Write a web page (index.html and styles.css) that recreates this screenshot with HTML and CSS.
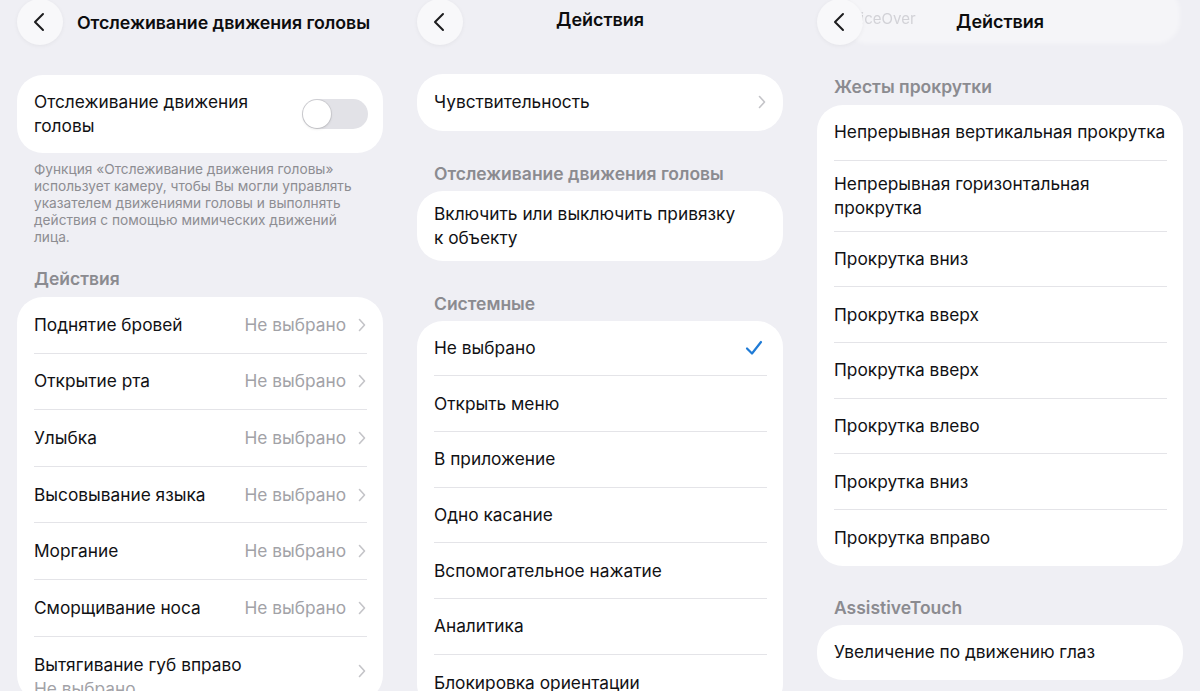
FILE: index.html
```html
<!DOCTYPE html>
<html lang="ru">
<head>
<meta charset="utf-8">
<title>Отслеживание движения головы</title>
<link rel="stylesheet" href="styles.css">
</head>
<body>
<div class="screens">
  <!-- Panel 1 -->
  <section class="panel">
    <header class="nav">
      <button class="back" aria-label="Назад"><svg viewBox="0 0 12 20" width="12" height="20"><path d="M10 2 L2 10 L10 18" fill="none" stroke="#1c1c1e" stroke-width="2" stroke-linecap="round" stroke-linejoin="round"/></svg></button>
      <h1 class="nav-title left">Отслеживание движения головы</h1>
    </header>
    <div class="card toggle-card">
      <span class="label">Отслеживание движения<br>головы</span>
      <span class="toggle"><span class="knob"></span></span>
    </div>
    <p class="footnote">Функция «Отслеживание движения головы» использует камеру, чтобы Вы могли управлять указателем движениями головы и выполнять действия с помощью мимических движений лица.</p>
    <h2 class="section first">Действия</h2>
    <div class="card list">
      <div class="row"><span class="label">Поднятие бровей</span><span class="value">Не выбрано</span><svg class="chev" viewBox="0 0 8 14" width="8" height="14"><path d="M1.5 1.5 L6.5 7 L1.5 12.5" fill="none" stroke="#c4c4c8" stroke-width="1.6" stroke-linecap="round" stroke-linejoin="round"/></svg></div>
      <div class="row"><span class="label">Открытие рта</span><span class="value">Не выбрано</span><svg class="chev" viewBox="0 0 8 14" width="8" height="14"><path d="M1.5 1.5 L6.5 7 L1.5 12.5" fill="none" stroke="#c4c4c8" stroke-width="1.6" stroke-linecap="round" stroke-linejoin="round"/></svg></div>
      <div class="row"><span class="label">Улыбка</span><span class="value">Не выбрано</span><svg class="chev" viewBox="0 0 8 14" width="8" height="14"><path d="M1.5 1.5 L6.5 7 L1.5 12.5" fill="none" stroke="#c4c4c8" stroke-width="1.6" stroke-linecap="round" stroke-linejoin="round"/></svg></div>
      <div class="row"><span class="label">Высовывание языка</span><span class="value">Не выбрано</span><svg class="chev" viewBox="0 0 8 14" width="8" height="14"><path d="M1.5 1.5 L6.5 7 L1.5 12.5" fill="none" stroke="#c4c4c8" stroke-width="1.6" stroke-linecap="round" stroke-linejoin="round"/></svg></div>
      <div class="row"><span class="label">Моргание</span><span class="value">Не выбрано</span><svg class="chev" viewBox="0 0 8 14" width="8" height="14"><path d="M1.5 1.5 L6.5 7 L1.5 12.5" fill="none" stroke="#c4c4c8" stroke-width="1.6" stroke-linecap="round" stroke-linejoin="round"/></svg></div>
      <div class="row"><span class="label">Сморщивание носа</span><span class="value">Не выбрано</span><svg class="chev" viewBox="0 0 8 14" width="8" height="14"><path d="M1.5 1.5 L6.5 7 L1.5 12.5" fill="none" stroke="#c4c4c8" stroke-width="1.6" stroke-linecap="round" stroke-linejoin="round"/></svg></div>
      <div class="row tall"><span class="label stack">Вытягивание губ вправо<span class="sub">Не выбрано</span></span><svg class="chev" viewBox="0 0 8 14" width="8" height="14"><path d="M1.5 1.5 L6.5 7 L1.5 12.5" fill="none" stroke="#c4c4c8" stroke-width="1.6" stroke-linecap="round" stroke-linejoin="round"/></svg></div>
    </div>
  </section>

  <!-- Panel 2 -->
  <section class="panel">
    <header class="nav">
      <button class="back" aria-label="Назад"><svg viewBox="0 0 12 20" width="12" height="20"><path d="M10 2 L2 10 L10 18" fill="none" stroke="#1c1c1e" stroke-width="2" stroke-linecap="round" stroke-linejoin="round"/></svg></button>
      <h1 class="nav-title center">Действия</h1>
    </header>
    <div class="card list top-card">
      <div class="row"><span class="label">Чувствительность</span><svg class="chev" viewBox="0 0 8 14" width="8" height="14"><path d="M1.5 1.5 L6.5 7 L1.5 12.5" fill="none" stroke="#c4c4c8" stroke-width="1.6" stroke-linecap="round" stroke-linejoin="round"/></svg></div>
    </div>
    <h2 class="section">Отслеживание движения головы</h2>
    <div class="card list">
      <div class="row two"><span class="label">Включить или выключить привязку<br>к объекту</span></div>
    </div>
    <h2 class="section">Системные</h2>
    <div class="card list">
      <div class="row r2"><span class="label">Не выбрано</span><svg class="check" viewBox="0 0 18 16" width="18" height="16"><path d="M2 8.5 L7 13.5 L16 2" fill="none" stroke="#1f7bd6" stroke-width="2.2" stroke-linecap="round" stroke-linejoin="round"/></svg></div>
      <div class="row r2"><span class="label">Открыть меню</span></div>
      <div class="row r2"><span class="label">В приложение</span></div>
      <div class="row r2"><span class="label">Одно касание</span></div>
      <div class="row r2"><span class="label">Вспомогательное нажатие</span></div>
      <div class="row r2"><span class="label">Аналитика</span></div>
      <div class="row r2"><span class="label">Блокировка ориентации</span></div>
    </div>
  </section>

  <!-- Panel 3 -->
  <section class="panel">
    <header class="nav">
      <div class="ghost"></div>
      <span class="ghost-text">VoiceOver</span>
      <button class="back" aria-label="Назад"><svg viewBox="0 0 12 20" width="12" height="20"><path d="M10 2 L2 10 L10 18" fill="none" stroke="#1c1c1e" stroke-width="2" stroke-linecap="round" stroke-linejoin="round"/></svg></button>
      <h1 class="nav-title center low">Действия</h1>
    </header>
    <h2 class="section s3">Жесты прокрутки</h2>
    <div class="card list">
      <div class="row r3"><span class="label">Непрерывная вертикальная прокрутка</span></div>
      <div class="row two r3t"><span class="label">Непрерывная горизонтальная<br>прокрутка</span></div>
      <div class="row r3"><span class="label">Прокрутка вниз</span></div>
      <div class="row r3"><span class="label">Прокрутка вверх</span></div>
      <div class="row r3"><span class="label">Прокрутка вверх</span></div>
      <div class="row r3"><span class="label">Прокрутка влево</span></div>
      <div class="row r3"><span class="label">Прокрутка вниз</span></div>
      <div class="row r3"><span class="label">Прокрутка вправо</span></div>
    </div>
    <h2 class="section s-last">AssistiveTouch</h2>
    <div class="card list">
      <div class="row r3 last"><span class="label">Увеличение по движению глаз</span></div>
    </div>
  </section>
</div>
</body>
</html>
```

FILE: styles.css
```css
* { box-sizing: border-box; }

html, body {
  margin: 0;
  padding: 0;
  background: #efeff4;
}

body {
  font-family: Inter, "Liberation Sans", Arial, sans-serif;
  color: #111114;
  -webkit-font-smoothing: antialiased;
}

.screens {
  display: flex;
  width: 1200px;
  height: 691px;
  overflow: hidden;
}

.panel {
  position: relative;
  width: 400px;
  flex: 0 0 400px;
  height: 691px;
  overflow: hidden;
  background: #efeff4;
  display: flex;
  flex-direction: column;
}

/* Navigation */
.nav {
  position: relative;
  height: 45px;
  flex: 0 0 45px;
  display: flex;
  align-items: center;
  padding-left: 17px;
}

.back {
  position: relative;
  z-index: 2;
  width: 46px;
  height: 46px;
  margin-top: -1px;
  border: none;
  border-radius: 50%;
  background: #f8f8fa;
  box-shadow: 0 1px 4px rgba(0, 0, 0, 0.05);
  display: flex;
  align-items: center;
  justify-content: center;
  padding: 0 3px 0 0;
  flex: 0 0 46px;
}

.nav-title {
  margin: 0;
  font-size: 18px;
  font-weight: 600;
  color: #0c0c0e;
  white-space: nowrap;
  letter-spacing: -0.05px;
}

.nav-title.left {
  font-size: 17.8px;
  margin-left: 14px;
  margin-top: 0;
}

.nav-title.center {
  position: absolute;
  left: 0;
  right: 0;
  top: 9px;
  text-align: center;
  line-height: 22px;
}

.nav-title.low { top: 11px; }

.ghost {
  position: absolute;
  left: 45px;
  right: 20px;
  top: -12px;
  height: 56px;
  border-radius: 24px;
  background: rgba(255, 255, 255, 0.4);
  filter: blur(2px);
}

.ghost-text {
  position: absolute;
  left: 42px;
  top: 9px;
  font-size: 15px;
  color: #d2d2d7;
  filter: blur(0.5px);
  z-index: 1;
}

/* Cards */
.card {
  margin: 0 17px;
  background: #ffffff;
  border-radius: 26px;
}

.toggle-card {
  margin-top: 30px;
  padding: 15px 15px 15px 17px;
  display: flex;
  align-items: center;
  justify-content: space-between;
  font-size: 17.3px;
  line-height: 24px;
}

.toggle {
  position: relative;
  width: 66px;
  height: 30px;
  border-radius: 15px;
  background: #e2e2e7;
  flex: 0 0 66px;
}

.knob {
  position: absolute;
  left: 1px;
  top: 1px;
  width: 28px;
  height: 28px;
  border-radius: 50%;
  background: #ffffff;
  box-shadow: 0 0 0 1px rgba(0, 0, 0, 0.08), 0 1px 3px rgba(0, 0, 0, 0.12);
}

.footnote {
  margin: 8px 45px 0 34px;
  font-size: 13.7px;
  line-height: 17px;
  color: #8d8d92;
}

.section {
  margin: 32px 0 6px 34px;
  font-size: 17.5px;
  line-height: 22px;
  font-weight: 600;
  color: #8b8b90;
}

.section.first { margin-top: 22px; margin-bottom: 7px; }
.section.s3 { margin-top: 31px; margin-bottom: 7px; }
.section.s-last { margin-top: 31px; }

.top-card { margin-top: 29px; }

.list {
  padding-left: 17px;
}

.row {
  display: flex;
  align-items: center;
  min-height: 56.6px;
  font-size: 17.3px;
  line-height: 24px;
  border-bottom: 1px solid #e4e4e8;
  margin-right: 16px;
  padding-right: 0;
}

.row:last-child { border-bottom: none; }

.row .label { flex: 1; }

.row .value {
  color: #a2a2a7;
  margin-right: 12px;
}

.row .chev { flex: 0 0 8px; margin-right: 1px; }

.row .check { margin-right: 4px; }

.row.two {
  min-height: 70px;
  padding-top: 11px;
  padding-bottom: 11px;
}

.row.r2 { min-height: 55.7px; }
.row.r3 { min-height: 55.7px; }
.row.r3t { min-height: 71px; }
.row.last { min-height: 55px; }

.row.tall {
  padding-top: 16px;
  align-items: flex-start;
}

.row.tall .chev { margin-top: 11px; }

.stack {
  display: flex;
  flex-direction: column;
}

.sub {
  color: #a2a2a7;
  line-height: 24px;
}
```
